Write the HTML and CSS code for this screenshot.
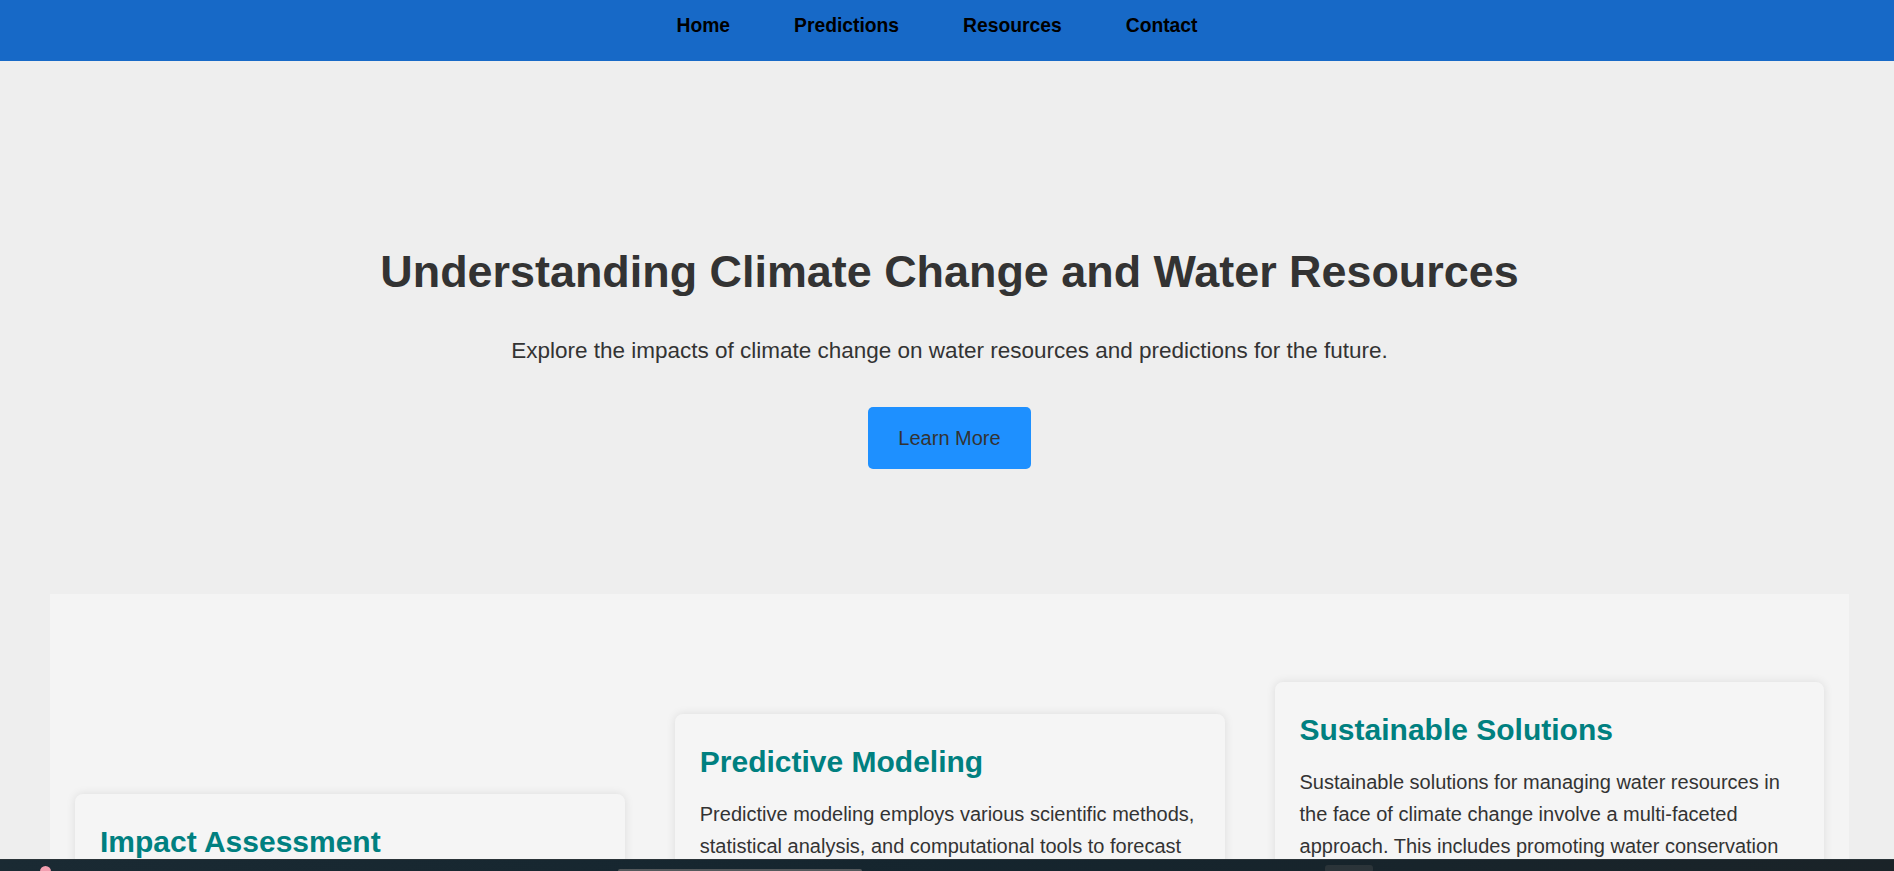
FILE: index.html
```html
<!DOCTYPE html>
<html lang="en">
<head>
<meta charset="utf-8">
<title>Climate Change and Water Resources</title>
<link rel="stylesheet" href="styles.css">
</head>
<body>
<header class="site-header">
  <nav class="main-nav">
    <ul class="nav-list">
      <li><a class="nav-link" href="#">Home</a></li>
      <li><a class="nav-link" href="#">Predictions</a></li>
      <li><a class="nav-link" href="#">Resources</a></li>
      <li><a class="nav-link" href="#">Contact</a></li>
    </ul>
  </nav>
</header>

<section class="hero">
  <h1 class="hero-title">Understanding Climate Change and Water Resources</h1>
  <p class="hero-text">Explore the impacts of climate change on water resources and predictions for the future.</p>
  <button class="hero-button" type="button">Learn More</button>
</section>

<section class="features">
  <article class="card card-low">
    <h2 class="card-title">Impact Assessment</h2>
    <p class="card-text">Impact assessment evaluates how rising temperatures, shifting precipitation patterns, and extreme weather events affect the availability, quality, and distribution of water resources across regions and communities.</p>
  </article>
  <article class="card card-mid">
    <h2 class="card-title">Predictive Modeling</h2>
    <p class="card-text">Predictive modeling employs various scientific methods, statistical analysis, and computational tools to forecast future changes in water availability, river flows, and groundwater levels under different climate scenarios.</p>
  </article>
  <article class="card card-high">
    <h2 class="card-title">Sustainable Solutions</h2>
    <p class="card-text">Sustainable solutions for managing water resources in the face of climate change involve a multi-faceted approach. This includes promoting water conservation and efficiency, improving infrastructure, and protecting natural ecosystems.</p>
  </article>
</section>

<div class="taskbar">
  <span class="taskbar-dot"></span>
  <span class="taskbar-search"></span>
  <span class="taskbar-app"></span>
</div>
</body>
</html>
```

FILE: styles.css
```css
html {
  overflow: hidden;
}

body {
  margin: 0;
  font-family: "Liberation Sans", Arial, sans-serif;
  color: #333;
  background: #eeeeee;
}

.site-header {
  background: #1769c7;
  height: 61px;
}

.main-nav {
  padding-top: 15px;
}

.nav-list {
  list-style: none;
  margin: 0;
  padding: 0 20px 0 0;
  display: flex;
  justify-content: center;
  gap: 64px;
}

.nav-link {
  color: #000;
  text-decoration: none;
  font-weight: bold;
  font-size: 19.3px;
}

.hero {
  text-align: center;
  padding: 185px 20px 125px 25px;
  background: #eeeeee;
}

.hero-title {
  margin: 0;
  font-size: 44.9px;
  font-weight: bold;
  color: #333;
}

.hero-text {
  margin: 40px 0 0;
  font-size: 22.5px;
  color: #333;
}

.hero-button {
  margin-top: 43px;
  font-family: "Liberation Sans", Arial, sans-serif;
  font-size: 20px;
  color: #333;
  background: #1e90ff;
  border: none;
  border-radius: 5px;
  padding: 19.5px 30px;
  cursor: pointer;
}

.features {
  margin-left: 50px;
  width: 95%;
  box-sizing: border-box;
  background: #f4f4f4;
  padding: 25px;
  display: flex;
  align-items: flex-start;
  gap: 50px;
  min-height: 600px;
}

.card {
  flex: 1;
  background: #f5f5f5;
  border-radius: 8px;
  box-shadow: 0 0 10px rgba(0, 0, 0, 0.1);
  padding: 25px;
}

.card-low {
  margin-top: 175px;
}

.card-mid {
  margin-top: 95px;
}

.card-high {
  margin-top: 63px;
}

.card-title {
  margin: 6px 0 19px;
  font-size: 30px;
  color: #008080;
}

.card-text {
  margin: 0;
  font-size: 20px;
  line-height: 32px;
  color: #333;
}

.taskbar {
  position: fixed;
  left: 0;
  right: 0;
  bottom: 0;
  height: 11px;
  background: linear-gradient(90deg, #1a2a33, #15252e 50%, #1a2328);
  border-top: 1px solid #2a3338;
}

.taskbar-dot {
  position: absolute;
  left: 40px;
  top: 6px;
  width: 11px;
  height: 11px;
  border-radius: 50%;
  background: #f29fb0;
}

.taskbar-search {
  position: absolute;
  left: 618px;
  top: 9px;
  width: 244px;
  height: 4px;
  background: #55595c;
  border-radius: 2px;
}

.taskbar-app {
  position: absolute;
  left: 1325px;
  top: 5px;
  width: 48px;
  height: 8px;
  background: #2b3439;
  border-radius: 3px;
}
```
